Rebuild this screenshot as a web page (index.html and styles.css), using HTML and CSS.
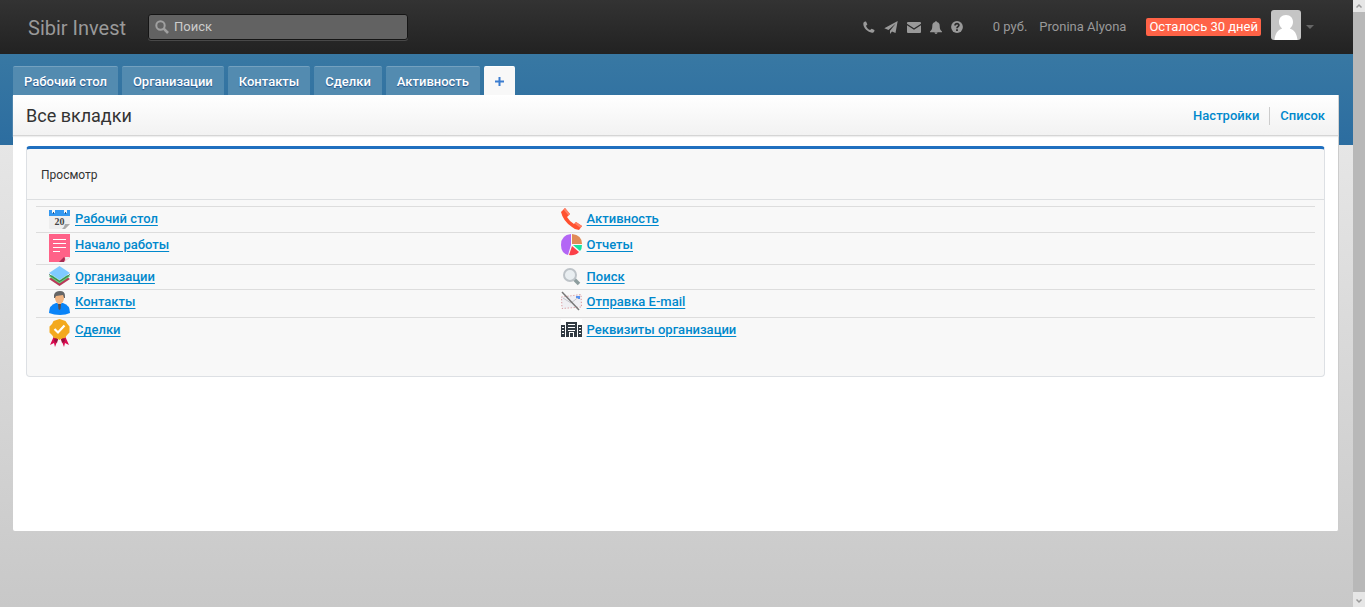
FILE: index.html
```html
<!DOCTYPE html>
<html lang="ru">
<head>
<meta charset="utf-8">
<title>Sibir Invest – Все вкладки</title>
<link rel="stylesheet" href="styles.css">
</head>
<body>
<div class="page">
  <header class="topbar">
    <a class="brand" href="#">Sibir Invest</a>
    <label class="search">
      <svg width="14" height="14" viewBox="0 0 14 14" aria-hidden="true"><circle cx="5.5" cy="5.5" r="4.2" fill="none" stroke="#a0a0a0" stroke-width="2"/><path d="M8.7 8.7L13 13" stroke="#a0a0a0" stroke-width="2.6"/></svg>
      <input type="search" placeholder="Поиск" aria-label="Поиск">
    </label>
    <nav class="tools" aria-label="Инструменты">
      <a href="#" aria-label="Звонок"><svg width="12" height="12" viewBox="0 0 12 12"><path d="M.6 1.6C1.2.7 2.3.3 3 .6l1.3 2.6c.2.6-1.1 1.2-1.2 1.7.4 1.6 2.4 3.6 4 4 .5-.1 1.1-1.4 1.7-1.2l2.6 1.3c.3.7-.1 1.8-1 2.4C6 13.2-1.2 6 .6 1.6z"/></svg></a>
      <a href="#" aria-label="Отправить"><svg width="14" height="13" viewBox="0 0 14 13"><path d="M13.7.1L11.5 12 8 10.500 6 12.900V9.700L11.800 2.600 4.500 9 .3 7.300z"/></svg></a>
      <a href="#" aria-label="Почта"><svg width="14" height="11" viewBox="0 0 14 11"><path d="M1 0h12q1 0 1 1v.8L7 6.300 0 1.800V1q0-1 1-1zM0 3.300l7 4.500 7-4.500V10q0 1-1 1H1q-1 0-1-1z"/></svg></a>
      <a href="#" aria-label="Уведомления"><svg width="12" height="13" viewBox="0 0 12 13"><path d="M5.200 1q0-.9.8-.9t.8.900C9.100 1.500 9.700 3 9.700 5c0 3 .8 4.300 2.300 5.500v.8H0v-.8C1.500 9.300 2.300 8 2.300 5c0-2 .600-3.500 2.900-4zM4.400 11.600h3.200q-.2 1.300-1.600 1.300t-1.600-1.300z"/></svg></a>
      <a href="#" aria-label="Помощь"><svg width="12" height="12" viewBox="0 0 12 12"><circle cx="6" cy="6" r="5.900"/><path d="M4 4.500C4.200 2 8 2.200 7.900 4.300 7.800 5.700 6 5.600 6 7.200" fill="none" stroke="#292929" stroke-width="1.700"/><path d="M5.100 8.200h1.800v1.700H5.100z" fill="#292929"/></svg></a>
    </nav>
    <span class="balance">0 руб.</span>
    <a class="user" href="#">Pronina Alyona</a>
    <a class="trial" href="#">Осталось 30 дней</a>
    <button class="account" type="button" aria-label="Меню пользователя">
      <svg class="avatar" width="30" height="30" viewBox="0 0 30 30"><path fill="#c5c5c5" d="M0 0h30v30H0z"/><path fill="#fff" d="M15 5c4.500 0 7 3 7 7 0 3-1.300 5-3.200 6.400C23.500 19.700 26 24 26.500 30h-23C4 24 6.500 19.700 11.200 18.400 9.300 17 8 15 8 12c0-4 2.500-7 7-7z"/></svg>
      <span class="caret"></span>
    </button>
  </header>

  <div class="stage">
    <nav class="tabs">
      <a class="tab" href="#">Рабочий стол</a>
      <a class="tab" href="#">Организации</a>
      <a class="tab" href="#">Контакты</a>
      <a class="tab" href="#">Сделки</a>
      <a class="tab" href="#">Активность</a>
      <a class="tab tab-active" href="#" aria-label="Все вкладки"><svg width="9" height="9" viewBox="0 0 9 9"><path d="M4.500 0v9M0 4.500h9" stroke="#3b7dd0" stroke-width="2"/></svg></a>
    </nav>
    <main class="content">
      <div class="heading">
        <h1>Все вкладки</h1>
        <nav class="actions"><a href="#">Настройки</a><a href="#">Список</a></nav>
      </div>
      <section class="panel">
        <h2>Просмотр</h2>
        <table class="links">
          <tr class="row-m">
            <td><a href="#"><svg width="21" height="22" viewBox="0 -2 21 22"><path fill="#eee" d="M0 5h21v9l-5 5H1q-1 0-1-1z"/><path fill="#3498f0" d="M0 0h21v6H0z"/><path fill="#f8f8f8" d="M3 0h3v3H3zM15 0h3v3h-3z"/><path fill="#25598e" d="M4 2h1v2H4zM16 2h1v2h-1z"/><path fill="#aaa" d="M21 14l-5 5h-3q2-1 3-5z"/><text class="day" x="10.500" y="15" text-anchor="middle">20</text></svg>Рабочий стол</a></td>
            <td><a href="#"><svg width="21" height="22" viewBox="0 0 21 22"><path fill="#ff5130" d="M0 4L4 0l5 6-3 3q3 5 7 7l2-2 6 4-3 4q-4 0-7-3Q2 13 0 4z"/><path fill="#ff8066" d="M4 0l5 6-1.500 1.500L2.500 1.500zM15 14l6 4-1.500 2L13.500 15.500z"/></svg>Активность</a></td>
          </tr>
          <tr class="row-xl">
            <td><a href="#"><svg width="21" height="28" viewBox="0 0 21 28"><path fill="#ff6288" d="M0 0h21v23l-6 5H0z"/><path fill="#a52c51" d="M10 28l5-5 1 2-1 3z"/><path fill="#eee" d="M15 28q2-2 1-5h5z"/><path stroke="#fff" d="M4 5.500h13M4 9.500h13M4 13.500h13M4 17.500h7"/></svg>Начало работы</a></td>
            <td><a href="#"><svg width="21" height="22" viewBox="0 0 21 22"><path fill="#b366f5" d="M10 0v11L7 21Q0 19 0 11 0 1 10 0z"/><path fill="#e18b58" d="M11 0q10 1 10 10H11z"/><path fill="#17e4a0" d="M12 11h9q0 4-2 6z"/><path fill="#fb4048" d="M11 12l7 6q-4 4-10 3z"/></svg>Отчеты</a></td>
          </tr>
          <tr class="row-s">
            <td><a href="#"><svg width="21" height="20" viewBox="0 0 21 20"><path fill="#b83a5a" d="M0 13l3-2 7.500 5L18 11l3 2-10.500 7z"/><path fill="#62d074" d="M0 10.500L3 9l7.500 5L18 9l3 1.500-10.500 7z"/><path fill="#386b4c" d="M0 8l10.500 7L21 8v1l-10.500 7L0 9z"/><path fill="#7fcaff" d="M10.500 0L21 7l-10.500 7L0 7z"/></svg>Организации</a></td>
            <td><a href="#"><svg width="21" height="20" viewBox="0 -1 21 20"><path d="M12.500 11.500L18 17" stroke="#8d9d9e" stroke-width="3.500"/><circle cx="9" cy="8" r="6" fill="#e9eef1" stroke="#bdc3c8" stroke-width="2"/></svg>Поиск</a></td>
          </tr>
          <tr class="row-l">
            <td><a href="#"><svg width="21" height="24" viewBox="0 0 21 24"><path fill="#0a84f8" d="M0 22q0-8 7-10h7q7 2 7 10-4 2-10 2T0 22z"/><path fill="#f1b583" d="M6 4h9v4q-1 4-3 5l-1.500 2L9 13Q7 12 6 8z"/><path fill="#666" d="M5 7V4q1-4 6-4 5 0 5 5v2h-1L14 4 7 5 6 7z"/><path fill="#604d45" d="M9 13h3l-.5 5-1 1-1-1z"/></svg>Контакты</a></td>
            <td><a href="#"><svg width="21" height="20" viewBox="0 0 21 20"><path fill="#efeff3" d="M0 6l20-3 1 13-20 2z"/><path d="M.5 6L20 3.500l.5 12.500L1 17.500z" fill="none" stroke="#d5868a" stroke-dasharray="1 2"/><path d="M2 7l8 5 9-7" fill="none" stroke="#c5c6cb"/><path stroke="#5993ee" stroke-width="2" d="M15 6h3v2"/><path d="M1 1l17 18" stroke="#777" stroke-width="1.500"/></svg>Отправка E-mail</a></td>
          </tr>
          <tr class="row-l">
            <td><a href="#"><svg width="21" height="28" viewBox="0 0 21 28"><path fill="#d80b50" d="M5 17l4 3-3 8-1-4-4 2zM16 17l-4 3 3 8 1-4 4 2z"/><path fill="#98103d" d="M6 18l3 2-1 4-3-2zM15 18l-3 2 1 4 3-2z"/><path fill="#f3a91e" d="M10.500 0l3 1 3 1 2 3 2 2.500v6L18 16l-2 3-3 .5-2.500 1.500L8 19.500 5 19l-2-3-2.500-2.500v-6L3 5l1.500-3 3-1z"/><path d="M5.500 10l3.500 3.500 6.500-7" fill="none" stroke="#fff" stroke-width="2.200"/></svg>Сделки</a></td>
            <td><a href="#"><svg width="21" height="21" viewBox="0 -2 21 21"><path fill="#fff" d="M0-2h21v21H0z"/><path fill="#323b43" d="M0 4h4v12H0zM17 4h4v12h-4zM5 1h11v15H5z"/><path stroke="#fff" d="M7 3.500h7M7 6.500h7M7 9.500h7M1 6.500h2M1 9.500h2M1 12.500h2M18 6.500h2M18 9.500h2M18 12.500h2"/><path fill="#fff" d="M8 11h5v5H8z"/><path fill="#323b43" d="M9 12h3v4H9z"/></svg>Реквизиты организации</a></td>
          </tr>
        </table>
      </section>
    </main>
  </div>
</div>
<div class="scrollbar" aria-hidden="true">
  <svg width="12" height="12" viewBox="0 0 12 12"><path d="M3.500 7.500L6 5l2.500 2.500" fill="none" stroke="#999" stroke-width="1.500"/></svg>
  <svg width="12" height="15" viewBox="0 0 12 15"><path d="M3.500 7.500L6 10l2.500-2.500" fill="none" stroke="#999" stroke-width="1.500"/></svg>
</div>
</body>
</html>
```
FILE: styles.css
```css
* { box-sizing: border-box; }
body {
  margin: 0;
  min-height: 100vh;
  display: flex;
  font: 13px/18px Roboto, "Liberation Sans", sans-serif;
  color: #333;
}
a { color: #0088cc; text-decoration: none; }
svg { display: block; flex: none; }
.page {
  flex: 1;
  display: flex;
  flex-direction: column;
  background: linear-gradient(#e6e6e6 145px, #c8c8c8);
}
.scrollbar {
  width: 12px;
  display: flex;
  flex-direction: column;
  justify-content: space-between;
  background: #b8b8b8;
}
.scrollbar svg { background: #e6e6e6; }

.topbar {
  height: 54px;
  padding: 0 39px 0 28px;
  display: flex;
  align-items: center;
  background: linear-gradient(#333, #222);
  color: #999;
}
.topbar a { color: #999; }
.topbar .brand { padding-top: 2px; font-size: 20px; line-height: 20px; margin-right: 22px; }
.search {
  width: 260px;
  height: 26px;
  padding: 0 6px;
  display: flex;
  align-items: center;
  gap: 5px;
  background: #626262;
  border: 1px solid #151515;
  border-radius: 3px;
  box-shadow: 0 1px 0 #484848;
}
.search input {
  flex: 1;
  min-width: 0;
  padding: 0;
  border: 0;
  outline: 0;
  background: none;
  color: #ccc;
  font: inherit;
}
.search input::placeholder { color: #ccc; opacity: 1; }
.tools { margin-left: auto; display: flex; align-items: center; gap: 9px; }
.tools svg { fill: #999; }
.balance { margin-left: 30px; }
.user { margin-left: 12px; }
.topbar .trial {
  margin-left: 20px;
  padding: 0 3px;
  border-radius: 2px;
  background: #ff6347;
  color: #fff;
}
.account {
  margin-left: 10px;
  padding: 0;
  border: 0;
  background: none;
  display: flex;
  align-items: center;
  gap: 5px;
}
.avatar { border-radius: 3px; margin-bottom: 4px; }
.caret { border: 4px solid transparent; border-top-color: #666; border-bottom: 0; }

.stage {
  padding: 12px 14px 76px 13px;
  background: linear-gradient(#3878a3, #2c6da0) top / 100% 91px no-repeat;
  flex: 1;
  display: flex;
  flex-direction: column;
}
.tabs { display: flex; gap: 4px; }
.tab {
  height: 29px;
  padding: 6px 11px 0 10px;
  border-top: 1px solid #74a1bf;
  border-radius: 2px 2px 0 0;
  background: #538bb0;
  color: #fff;
  font-weight: 500;
  text-shadow: 0 1px 1px #20508a;
}
.tab:first-child { padding-left: 11px; }
.tab:not(:first-child) { padding-left: 11px; }
.tab-active { padding: 10px 11px; background: #f8f8f8; border-color: #fff; }
.content { flex: 1; background: #fff; border-right: 1px solid #ccc; border-radius: 0 0 2px 2px; }
.heading {
  height: 41px;
  padding: 2px 13px 0;
  display: flex;
  align-items: center;
  justify-content: space-between;
  background: linear-gradient(#fff, #f2f2f2);
  border-bottom: 1px solid #d5d5d5;
  box-shadow: 0 1px 1px #eee;
}
h1 { margin: 0; font-size: 18px; line-height: 24px; font-weight: 400; }
.actions { display: flex; }
.actions a { font-weight: 500; }
.actions a + a { margin-left: 10px; padding-left: 10px; border-left: 1px solid #ccc; }
.panel {
  margin: 10px 13px 0;
  padding-bottom: 29px;
  background: #f8f8f8;
  border: 1px solid #dde0e4;
  border-top: 3px solid #1f6fbf;
  border-radius: 4px;
}
h2 {
  margin: 0 0 6px;
  padding: 17px 14px 15px;
  font-size: 12px;
  line-height: 18px;
  font-weight: 400;
  border-bottom: 1px solid #dddfe1;
}
.links {
  width: calc(100% - 18px);
  margin: 0 9px;
  border-collapse: separate;
  border-spacing: 0;
  table-layout: fixed;
}
.links td { padding: 1px 13px 0; border-top: 1px solid #ddd; vertical-align: top; }
.links td:first-child { width: 40%; }
.links a { display: flex; gap: 5px; line-height: 22px; font-weight: 500; text-decoration: underline; text-underline-offset: 2px; }
.row-s { height: 25px; }
.row-m { height: 26px; }
.row-l { height: 28px; }
.row-xl { height: 32px; }
.day { font: bold 10px/10px "Liberation Serif", serif; fill: #444; }
```
